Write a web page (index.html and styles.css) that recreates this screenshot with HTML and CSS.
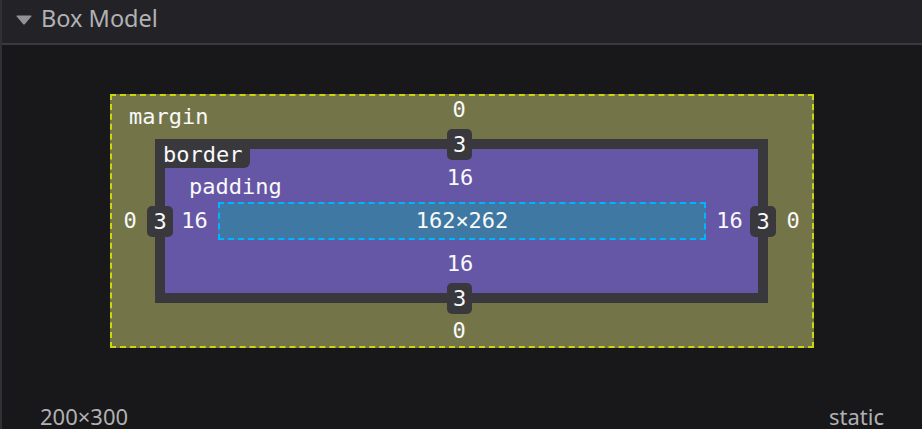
FILE: index.html
```html
<!DOCTYPE html>
<html lang="en">
<head>
<meta charset="utf-8">
<title>Box Model</title>
<link rel="stylesheet" href="styles.css">
</head>
<body>
<div class="panel">
  <header class="hd">
    <svg class="twisty" width="16" height="10" viewBox="0 0 16 10" aria-hidden="true">
      <path d="M1 0.5 H15 Q16 0.5 15.3 1.4 L8.8 9.2 Q8 10 7.2 9.2 L0.7 1.4 Q0 0.5 1 0.5 Z" fill="#939395"/>
    </svg>
    <span class="hd-title">Box Model</span>
  </header>
  <main class="body">
    <div class="mbox">
      <span class="lg lg-margin">margin</span>
      <span class="val m-top">0</span>
      <span class="val m-left">0</span>
      <div class="bbox">
        <div class="pbox">
          <span class="lg lg-padding">padding</span>
          <span class="val p-top">16</span>
          <span class="val p-left">16</span>
          <div class="cbox"><span class="val">162×262</span></div>
          <span class="val p-right">16</span>
          <span class="val p-bottom">16</span>
        </div>
        <span class="lg lg-border">border</span>
        <span class="val badge b-top">3</span>
        <span class="val badge b-left">3</span>
        <span class="val badge b-right">3</span>
        <span class="val badge b-bottom">3</span>
      </div>
      <span class="val m-right">0</span>
      <span class="val m-bottom">0</span>
    </div>
    <div class="info">
      <span>200×300</span>
      <span>static</span>
    </div>
  </main>
</div>
</body>
</html>
```
FILE: styles.css
```css
html, body {
  margin: 0;
  padding: 0;
  overflow: hidden;
  background: #18181a;
}

.panel {
  height: 100vh;
  border-left: 2px solid #313135;
  display: flex;
  flex-direction: column;
  overflow: hidden;
}

.hd {
  box-sizing: border-box;
  height: 45px;
  flex: none;
  background: #232327;
  border-bottom: 2px solid #3b3b3f;
  display: flex;
  align-items: flex-start;
  padding-top: 3px;
  font-family: "Noto Sans", "Open Sans", sans-serif;
  font-size: 23.5px;
  color: #b1b1b3;
}

.twisty {
  margin: 12px 9px 0 14px;
  flex: none;
}

.hd-title {
  line-height: 30px;
}

.body {
  flex: 1;
  display: flex;
  flex-direction: column;
}

.mbox {
  box-sizing: border-box;
  width: 704px;
  height: 254px;
  margin: 49px auto 0;
  border: 2px dashed #cdd60c;
  background: #737549;
  display: grid;
  grid-template-columns: 43px 1fr 44px;
  grid-template-rows: 43px 1fr 43px;
  position: relative;
  font-family: "DejaVu Sans Mono", monospace;
  font-size: 22px;
  line-height: 26px;
  color: #f9f9fa;
}

.val {
  justify-self: center;
  align-self: center;
}

.lg {
  position: absolute;
}

.lg-margin {
  left: 17px;
  top: 8px;
}

.m-top {
  grid-area: 1 / 2;
  align-self: start;
  padding-top: 1px;
  margin-right: 5px;
}

.m-bottom {
  grid-area: 3 / 2;
  align-self: end;
  padding-bottom: 2px;
  margin-right: 5px;
}

.m-left {
  grid-area: 2 / 1;
  margin-right: 7px;
}

.m-right {
  grid-area: 2 / 3;
  margin-left: 6px;
}

.bbox {
  grid-area: 2 / 2;
  background: #38383d;
  display: grid;
  grid-template-columns: 10px 1fr 10px;
  grid-template-rows: 10px 1fr 10px;
  position: relative;
}

.lg-border {
  left: 0;
  top: 0;
  background: #38383d;
  padding: 3px 8px 0 8px;
  border-bottom-right-radius: 6px;
  z-index: 2;
}

.badge {
  background: #38383d;
  border-radius: 5px;
  padding: 2px 6px;
  line-height: 27px;
  z-index: 1;
  justify-self: unsafe center;
  align-self: unsafe center;
}

.b-top {
  grid-area: 1 / 2;
  margin-right: 4px;
}

.b-bottom {
  grid-area: 3 / 2;
  margin-right: 4px;
}

.b-left {
  grid-area: 2 / 1;
}

.b-right {
  grid-area: 2 / 3;
}

.pbox {
  grid-area: 2 / 2;
  background: #6557a6;
  display: grid;
  grid-template-columns: 53px 1fr 52px;
  grid-template-rows: 53px 1fr 53px;
  position: relative;
}

.lg-padding {
  left: 24px;
  top: 25px;
}

.p-top {
  grid-area: 1 / 2;
  align-self: start;
  padding-top: 16px;
  margin-right: 4px;
}

.p-bottom {
  grid-area: 3 / 2;
  align-self: end;
  padding-bottom: 16px;
  margin-right: 4px;
}

.p-left {
  grid-area: 2 / 1;
  margin-left: 6px;
}

.p-right {
  grid-area: 2 / 3;
  margin-right: 5px;
}

.cbox {
  grid-area: 2 / 2;
  border: 2px dashed #00b4ff;
  background: #3f79a3;
  display: flex;
  align-items: center;
  justify-content: center;
}

.info {
  display: flex;
  justify-content: space-between;
  margin-top: 58px;
  padding: 0 38px 0 38px;
  font-family: "Noto Sans", "Open Sans", sans-serif;
  font-size: 22px;
  line-height: 20px;
  color: #b1b1b3;
}
```
